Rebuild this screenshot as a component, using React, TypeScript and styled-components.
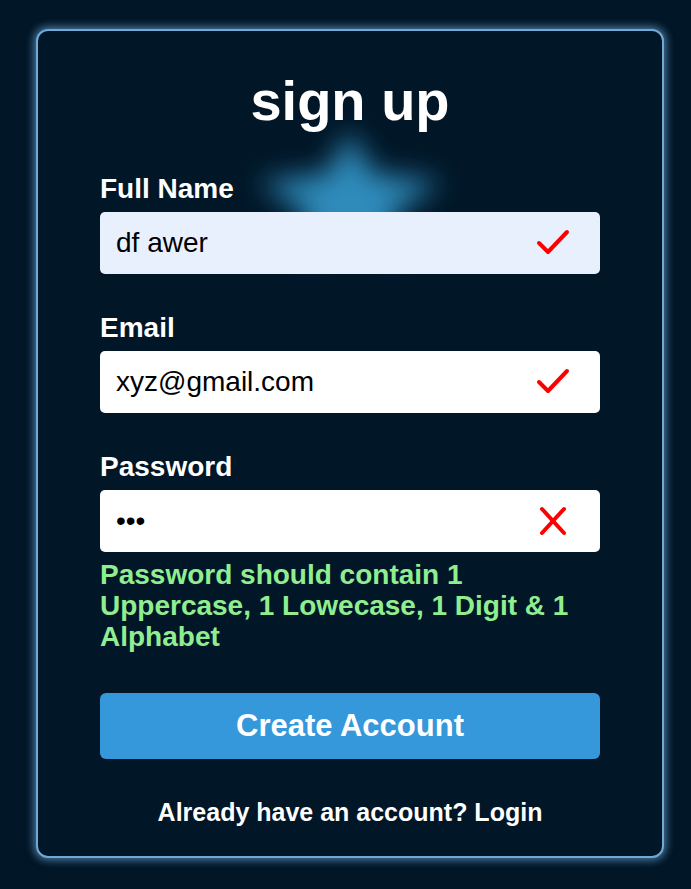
import React from "react";
import styled, { createGlobalStyle } from "styled-components";

const GlobalStyle = createGlobalStyle`
  html, body {
    margin: 0;
    padding: 0;
    background: #011627;
    font-family: "Liberation Sans", Arial, sans-serif;
  }
  * { box-sizing: border-box; }
`;

const Page = styled.div`
  min-height: 889px;
  padding: 29px 0 0 36px;
  background: #011627;
`;

const Card = styled.form`
  position: relative;
  width: 628px;
  height: 829px;
  padding: 38px 62px 0;
  border: 2px solid #6fa9d8;
  border-radius: 12px;
  background: #011627;
  box-shadow: 0 0 8px 2px rgba(111, 169, 216, 0.7);
  display: flex;
  flex-direction: column;
  overflow: hidden;
`;

const Glow = styled.svg`
  position: absolute;
  left: 182px;
  top: 55px;
  width: 260px;
  height: 220px;
  pointer-events: none;
`;

const Title = styled.h1`
  position: relative;
  margin: 0 0 40px;
  font-size: 56px;
  font-weight: 700;
  line-height: 64px;
  color: #ffffff;
  text-align: center;
`;

const Group = styled.div<{ $gap?: number }>`
  position: relative;
  display: flex;
  flex-direction: column;
  margin-bottom: ${(p) => p.$gap ?? 38}px;
`;

const Label = styled.label`
  font-size: 28px;
  font-weight: 700;
  line-height: 32px;
  color: #ffffff;
  margin-bottom: 7px;
`;

const FieldWrap = styled.div`
  position: relative;
`;

const Input = styled.input<{ $autofill?: boolean }>`
  width: 100%;
  height: 62px;
  padding: 0 70px 0 16px;
  border: none;
  border-radius: 5px;
  background: ${(p) => (p.$autofill ? "#e8f0fe" : "#ffffff")};
  font-family: "Liberation Sans", Arial, sans-serif;
  font-size: 28px;
  color: #000000;
  outline: none;
`;

const Icon = styled.svg`
  position: absolute;
  right: 30px;
  top: 50%;
  width: 34px;
  height: 30px;
  transform: translateY(-50%);
`;

const Hint = styled.p`
  margin: 7px 0 0;
  font-size: 28px;
  font-weight: 700;
  line-height: 31px;
  color: #90ee90;
`;

const Button = styled.button`
  height: 66px;
  margin-top: 3px;
  border: none;
  border-radius: 6px;
  background: #3498db;
  color: #ffffff;
  font-family: "Liberation Sans", Arial, sans-serif;
  font-size: 31px;
  font-weight: 700;
  cursor: pointer;
`;

const Footer = styled.p`
  margin: 39px 0 0;
  font-size: 25px;
  font-weight: 700;
  line-height: 29px;
  color: #ffffff;
  text-align: center;
`;

const CheckIcon = () => (
  <Icon viewBox="0 0 34 30">
    <path
      d="M3 15 L12 24 L31 4"
      fill="none"
      stroke="#ff0000"
      strokeWidth="4"
      strokeLinecap="round"
      strokeLinejoin="round"
    />
  </Icon>
);

const CrossIcon = () => (
  <Icon viewBox="0 0 34 30">
    <path
      d="M6 3 L28 27 M28 3 L6 27"
      fill="none"
      stroke="#ff0000"
      strokeWidth="4"
      strokeLinecap="round"
    />
  </Icon>
);

export default function App() {
  return (
    <>
      <GlobalStyle />
      <Page>
        <Card onSubmit={(e) => e.preventDefault()}>
          <Glow viewBox="0 0 260 220">
            <defs>
              <filter id="blur" x="-50%" y="-50%" width="200%" height="200%">
                <feGaussianBlur stdDeviation="14" />
              </filter>
            </defs>
            <polygon
              points="130,45 153,88 222,96 172,128 180,172 130,150 80,172 88,128 38,96 107,88"
              fill="#2d8bbb"
              filter="url(#blur)"
            />
          </Glow>
          <Title>sign up</Title>
          <Group>
            <Label>Full Name</Label>
            <FieldWrap>
              <Input $autofill type="text" defaultValue="df awer" />
              <CheckIcon />
            </FieldWrap>
          </Group>
          <Group>
            <Label>Email</Label>
            <FieldWrap>
              <Input type="email" defaultValue="xyz@gmail.com" />
              <CheckIcon />
            </FieldWrap>
          </Group>
          <Group $gap={38}>
            <Label>Password</Label>
            <FieldWrap>
              <Input type="password" defaultValue="abc" />
              <CrossIcon />
            </FieldWrap>
            <Hint>
              Password should contain 1 Uppercase, 1 Lowecase, 1 Digit &amp; 1
              Alphabet
            </Hint>
          </Group>
          <Button type="submit">Create Account</Button>
          <Footer>Already have an account? Login</Footer>
        </Card>
      </Page>
    </>
  );
}
